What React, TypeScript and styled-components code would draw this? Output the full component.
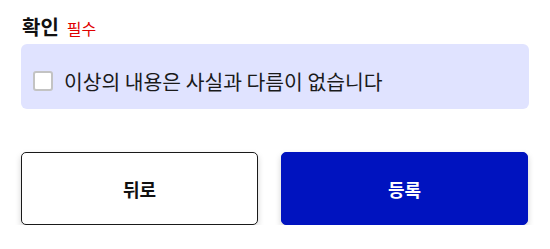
import styled, { createGlobalStyle } from "styled-components";
import { useState } from "react";

const GlobalStyle = createGlobalStyle`
  html, body {
    margin: 0;
    padding: 0;
    background: #ffffff;
  }
  body {
    font-family: "Noto Sans CJK KR", "Noto Sans", sans-serif;
    color: #111111;
  }
`;

const App = () => {
  const [checked, setChecked] = useState(false);
  return (
    <>
      <GlobalStyle />
      <Page>
        <Section>
          <TitleRow>
            <Title>{"확인"}</Title>
            <Required>{"필수"}</Required>
          </TitleRow>
          <ConfirmBox>
            <CheckLabel>
              <CheckInput
                type="checkbox"
                checked={checked}
                onChange={(e) => setChecked(e.target.checked)}
              />
              <CheckBox $checked={checked} />
              <CheckText>{"이상의 내용은 사실과 다름이 없습니다"}</CheckText>
            </CheckLabel>
          </ConfirmBox>
        </Section>
        <ButtonRow>
          <BackButton type="button">{"뒤로"}</BackButton>
          <SubmitButton type="button">{"등록"}</SubmitButton>
        </ButtonRow>
      </Page>
    </>
  );
};

export default App;

const Page = styled.div`
  width: 550px;
  box-sizing: border-box;
  padding: 12px 21px 0 21px;
  display: flex;
  flex-direction: column;
  gap: 43px;
`;

const Section = styled.div`
  display: flex;
  flex-direction: column;
  gap: 4px;
`;

const TitleRow = styled.div`
  display: flex;
  align-items: baseline;
  gap: 8px;
  height: 28px;
  padding-left: 1px;
`;

const Title = styled.h3`
  margin: 0;
  font-size: 20px;
  font-weight: 700;
  line-height: 30px;
  color: #111111;
`;

const Required = styled.span`
  font-size: 16px;
  font-weight: 400;
  color: #e00000;
`;

const ConfirmBox = styled.div`
  background-color: #e0e3ff;
  border-radius: 6px;
  padding: 24px 12px 15px 12px;
`;

const CheckLabel = styled.label`
  display: flex;
  align-items: center;
  gap: 11px;
  min-height: 26px;
  cursor: pointer;
`;

const CheckInput = styled.input`
  position: absolute;
  opacity: 0;
  width: 0;
  height: 0;
`;

const CheckBox = styled.span<{ $checked: boolean }>`
  width: 20px;
  height: 20px;
  box-sizing: border-box;
  border: 2px solid #c3c3c3;
  border-radius: 3px;
  background-color: ${({ $checked }) => ($checked ? "#0013bf" : "#ffffff")};
  flex-shrink: 0;
`;

const CheckText = styled.span`
  font-size: 20.4px;
  line-height: 26px;
  color: #1a1a1a;
`;

const ButtonRow = styled.div`
  display: grid;
  grid-template-columns: 237px 1fr;
  gap: 23px;
  padding-right: 1px;
`;

const BaseButton = styled.button`
  height: 73px;
  border-radius: 5px;
  font-family: "Noto Sans CJK KR", "Noto Sans", sans-serif;
  font-size: 18px;
  font-weight: 700;
  cursor: pointer;
  box-shadow: 0 3px 6px rgba(0, 0, 0, 0.18);
`;

const BackButton = styled(BaseButton)`
  background-color: #ffffff;
  color: #111111;
  border: 1px solid #1a1a1a;
`;

const SubmitButton = styled(BaseButton)`
  background-color: #0013bf;
  color: #ffffff;
  border: 1px solid #0013bf;
`;
